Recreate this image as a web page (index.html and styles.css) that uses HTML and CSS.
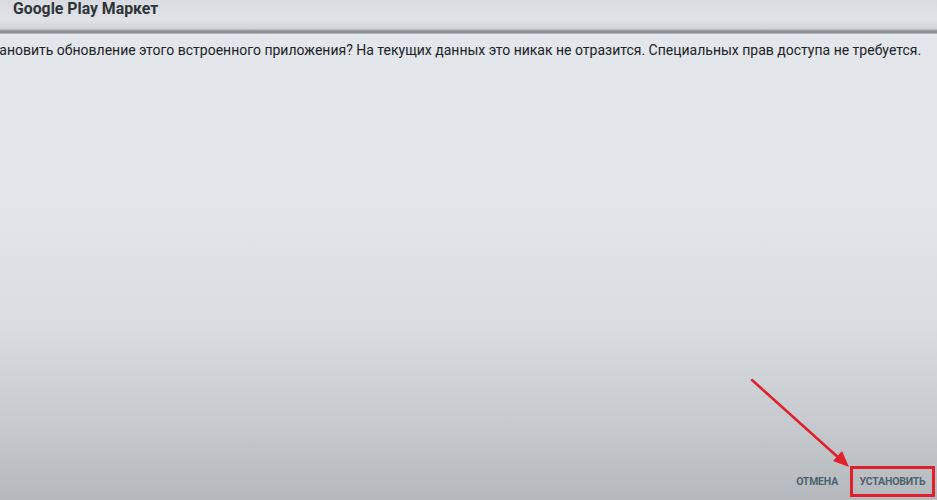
FILE: index.html
```html
<!DOCTYPE html>
<html lang="ru">
<head>
<meta charset="utf-8">
<title>Google Play Маркет</title>
<link rel="stylesheet" href="styles.css">
</head>
<body>
<div class="screen">
  <header class="topbar">
    <h1 class="title">Google Play Маркет</h1>
  </header>
  <main class="content">
    <p class="message">Установить обновление этого встроенного приложения? На текущих данных это никак не отразится. Специальных прав доступа не требуется.</p>
  </main>
  <footer class="actions">
    <button class="btn">ОТМЕНА</button>
    <button class="btn btn-primary">УСТАНОВИТЬ</button>
  </footer>
  <svg class="arrow" width="937" height="500" viewBox="0 0 937 500" aria-hidden="true">
    <line x1="752" y1="380" x2="840" y2="459" stroke="#e0202a" stroke-width="2.5" stroke-linecap="round"/>
    <polygon points="849,467 833,461 842,451" fill="#e0202a"/>
  </svg>
</div>
</body>
</html>
```
FILE: styles.css
```css
* { box-sizing: border-box; }
html, body { margin: 0; padding: 0; }
body {
  width: 937px;
  height: 500px;
  overflow: hidden;
  font-family: Roboto, "Liberation Sans", Arial, sans-serif;
}
.screen {
  position: relative;
  width: 937px;
  height: 500px;
  display: flex;
  flex-direction: column;
  background: linear-gradient(to bottom, #e3e6ea 0%, #e3e6eb 40%, #d9dce0 65%, #c6c9cd 85%, #b5b9bd 100%);
  overflow: hidden;
}
.topbar {
  height: 34px;
  padding: 0 0 0 13px;
  background: linear-gradient(to bottom, #d8dbdf 0%, #dfe2e6 60%, #d0d3d7 85%, #8e9297 91%, #8a8e93 96%, #c9ccd0 100%);
  display: flex;
  align-items: flex-start;
}
.title {
  margin: 0;
  font-size: 15.8px;
  line-height: 18px;
  font-weight: bold;
  color: #2e3338;
}
.content {
  flex: 1;
  padding-top: 8px;
}
.message {
  margin: 0 0 0 -23px;
  white-space: nowrap;
  font-size: 14px;
  line-height: 16px;
  color: #202326;
}
.actions {
  display: flex;
  justify-content: flex-end;
  align-items: center;
  gap: 5px;
  padding: 0 2px 3px 0;
}
.btn {
  font-family: Roboto, "Liberation Sans", Arial, sans-serif;
  font-weight: bold;
  font-size: 10.5px;
  color: #4d626c;
  background: none;
  border: 3px solid transparent;
  padding: 0 4px;
  height: 31px;
  letter-spacing: -0.2px;
}
.btn-primary {
  border-color: #e0202a;
  width: 85px;
  padding: 0 3px;
}
.arrow {
  position: absolute;
  left: 0;
  top: 0;
  pointer-events: none;
}
```
